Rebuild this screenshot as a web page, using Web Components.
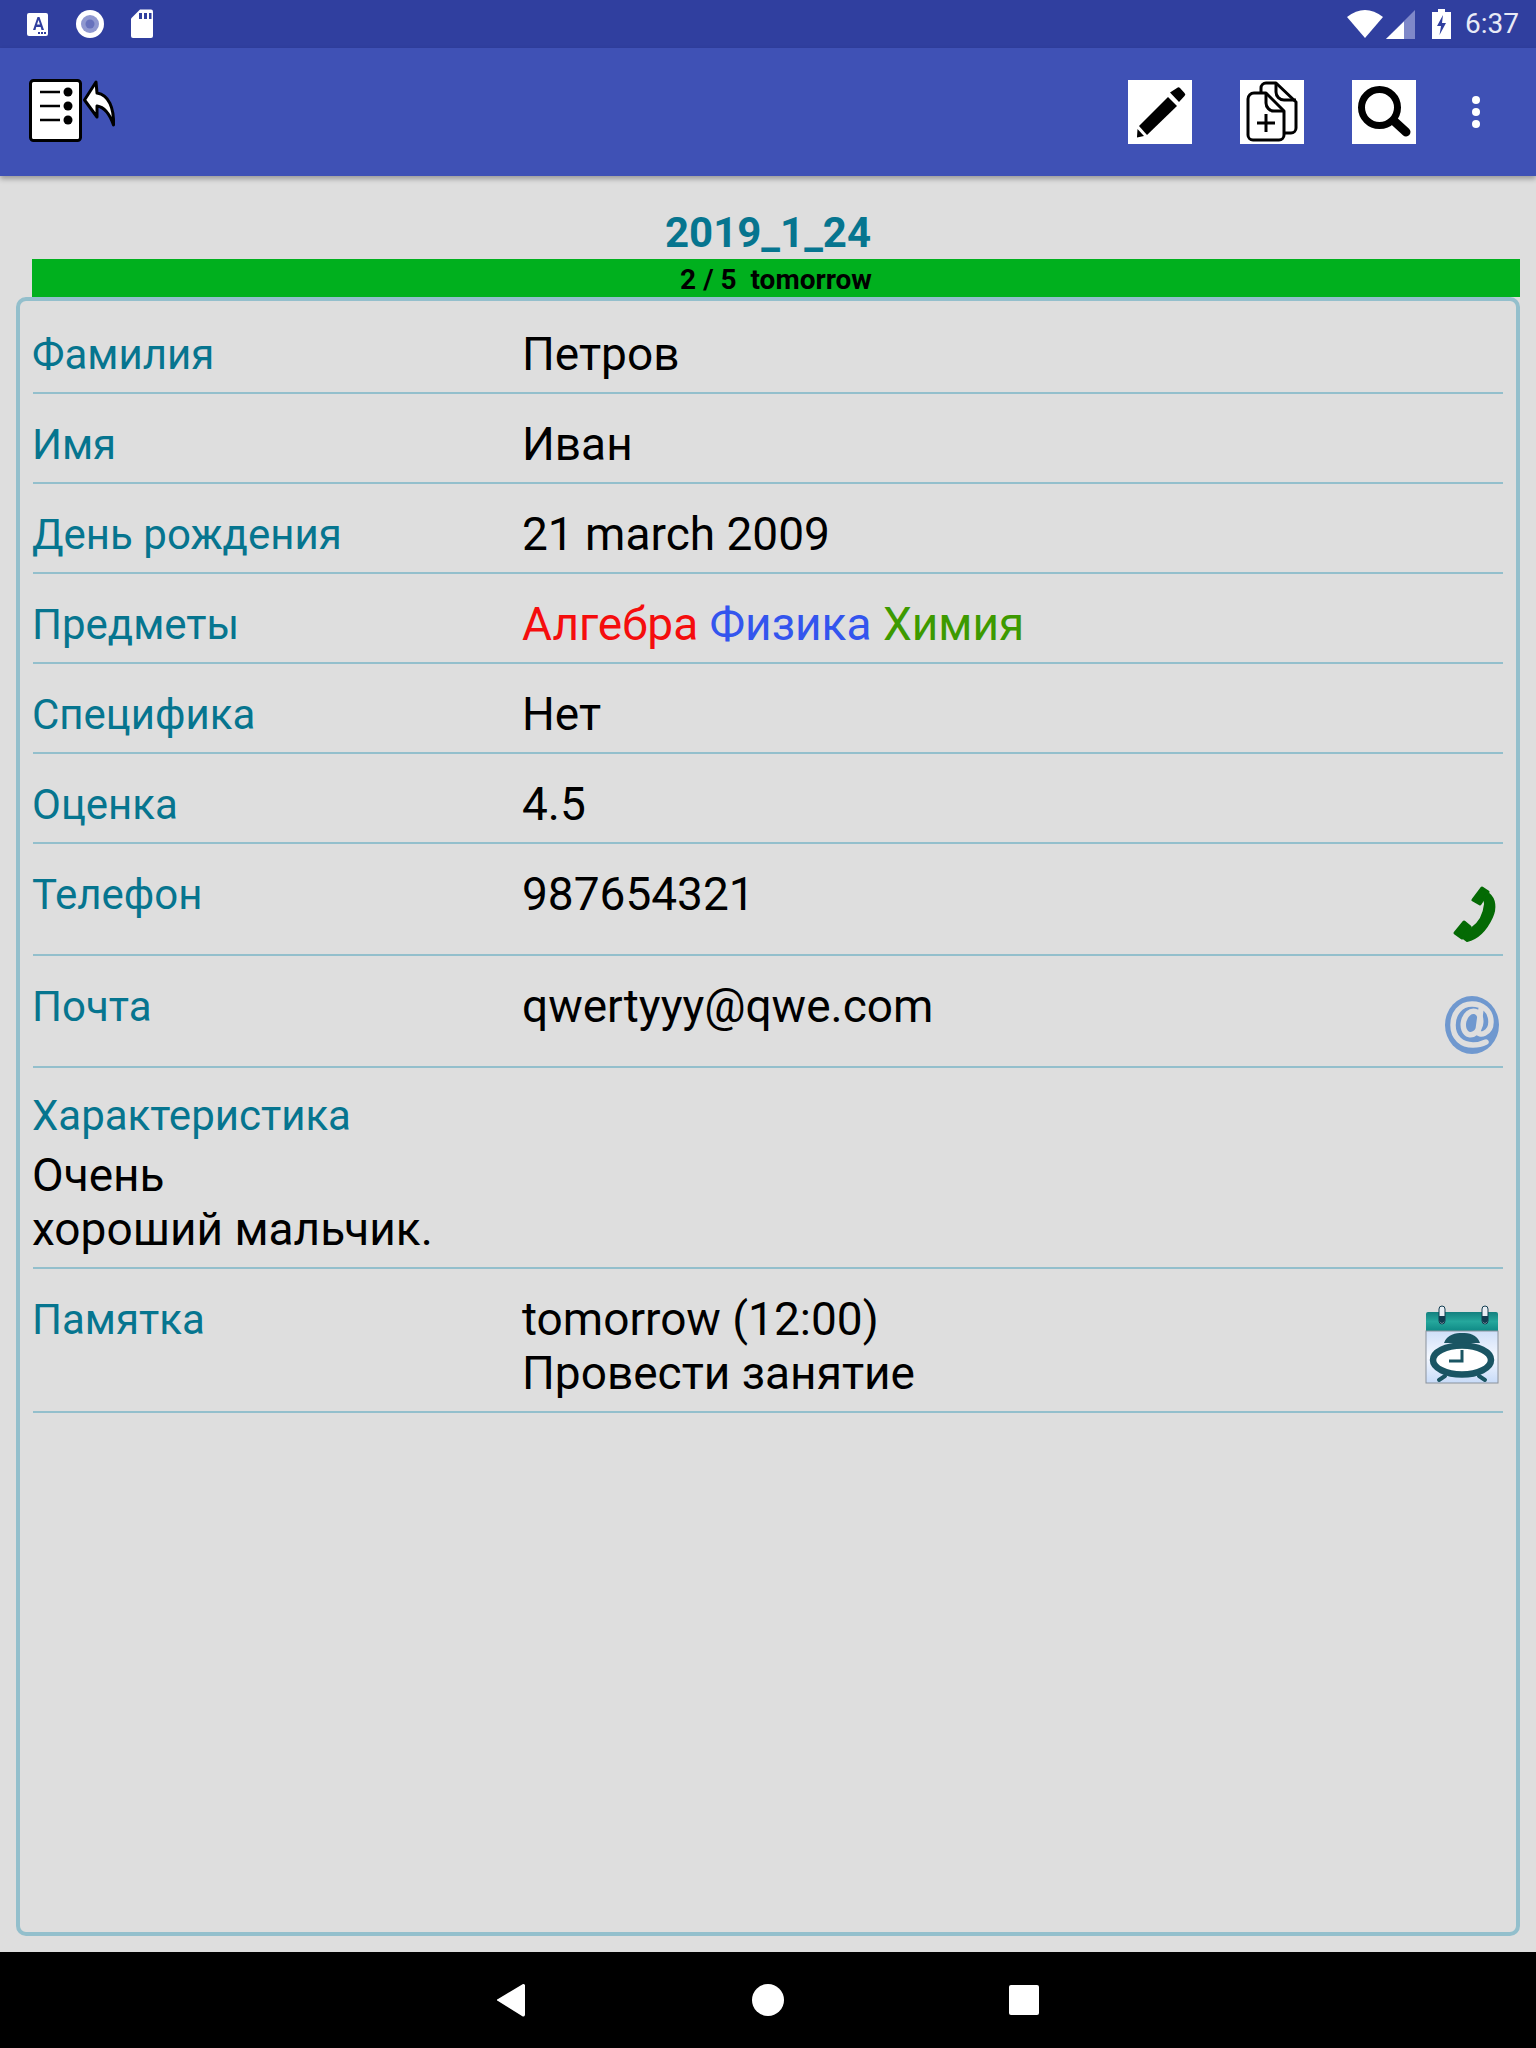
<!DOCTYPE html>
<html lang="ru">
<head>
<meta charset="utf-8">
<title>Student</title>
<style>
html, body { margin: 0; padding: 0; }
body { width: 1536px; height: 2048px; background: #dedede; font-family: Roboto, "Liberation Sans", sans-serif; }
#app { display: flex; flex-direction: column; height: 2048px; }
</style>
</head>
<body>
<div id="app">
  <status-bar></status-bar>
  <app-bar></app-bar>
  <lesson-header title="2019_1_24" note="2 / 5&nbsp; tomorrow"></lesson-header>
  <info-panel>
    <info-row label="Фамилия" style="--top:26px;--bottom:11px">Петров</info-row>
    <info-row label="Имя">Иван</info-row>
    <info-row label="День рождения">21 march 2009</info-row>
    <info-row label="Предметы"><span style="color:#f50d0d">Алгебра</span> <span style="color:#3355ee">Физика</span> <span style="color:#3d9a00">Химия</span></info-row>
    <info-row label="Специфика">Нет</info-row>
    <info-row label="Оценка">4.5</info-row>
    <info-row label="Телефон" style="--bottom:33px">987654321<row-icon slot="icon" kind="phone"></row-icon></info-row>
    <info-row label="Почта" style="--bottom:33px">qwertyyy@qwe.com<row-icon slot="icon" kind="at"></row-icon></info-row>
    <info-row label="Характеристика" stacked>Очень<br>хороший мальчик.</info-row>
    <info-row label="Памятка">tomorrow (12:00)<br>Провести занятие<row-icon slot="icon" kind="alarm"></row-icon></info-row>
  </info-panel>
  <nav-bar></nav-bar>
</div>

<script>
class StatusBar extends HTMLElement {
    constructor() {
        super();
        this.attachShadow({mode: 'open'}).innerHTML = `
        <style>
            :host { display: flex; align-items: center; height: 48px; background: #303f9f; color: #e8eaf6; flex: none; }
            svg { display: block; flex: none; }
            .left { display: flex; align-items: center; margin-left: 26px; }
            .right { display: flex; align-items: center; margin-left: auto; margin-right: 17px; }
            .time { font: 400 28px Roboto, sans-serif; margin-left: 14px; line-height: 48px; }
        </style>
        <div class="left">
            <svg width="24" height="26" viewBox="0 0 24 26"><rect x="1" y="2" width="21" height="23" rx="2" fill="#fff"/><path d="M7 19 L11.5 6 L13.500 6 L18 19 L15.500 19 L14.700 16 L10.200 16 L9.500 19Z M11 13.500 H14 L12.500 9Z" fill="#303f9f" fill-rule="evenodd"/><path d="M12 21h2v2h-2zM15 21h2v2h-2zM18 21h2v2h-2z" fill="#303f9f"/></svg>
            <svg style="margin-left:25px" width="30" height="30" viewBox="0 0 30 30"><circle cx="15" cy="15" r="14" fill="#fff"/><circle cx="15" cy="15" r="9" fill="#8f98d0"/><circle cx="15" cy="15" r="4.500" fill="#6772bd"/></svg>
            <svg style="margin-left:25px" width="24" height="30" viewBox="0 0 24 30"><path d="M10 0.500 H21 a2 2 0 0 1 2 2 V27 a2 2 0 0 1 -2 2 H3 a2 2 0 0 1 -2 -2 V9.500Z" fill="#fff"/><path d="M9 4h3v6h-3zM14 4h3v6h-3zM19 4h2.500v6h-2.500z" fill="#303f9f"/></svg>
        </div>
        <div class="right">
            <svg width="36" height="28" viewBox="0 0 36 28"><path d="M0 7 Q18 -7 36 7 L18 28Z" fill="#fff"/></svg>
            <svg style="margin-left:3px" width="29" height="29" viewBox="0 0 29 29"><path d="M29 0V29H0Z" fill="#7f88c9"/><path d="M18 11.500V29H0Z" fill="#fff"/></svg>
            <svg style="margin-left:17px" width="19" height="30" viewBox="0 0 19 30"><path d="M6 0h7v3h6v27H0V3h6Z" fill="#fff"/><path d="M11 6 L5 17 H9 L7.500 26 L14 14 H10Z" fill="#303f9f"/></svg>
            <span class="time">6:37</span>
        </div>`;
    }
}
customElements.define('status-bar', StatusBar);

class ActionButton extends HTMLElement {
    constructor() {
        super();
        this.attachShadow({mode: 'open'}).innerHTML = `
        <style>
            :host { display: block; width: 64px; height: 64px; background: #fff; flex: none; }
            svg { display: block; width: 64px; height: 64px; }
        </style>
        <svg viewBox="0 0 64 64">${actionIcons[this.getAttribute('kind')]}</svg>`;
    }
}

const actionIcons = {
    edit: `<path d="M42 12.500 L49 8 a2 2 0 0 1 3 0 L56.500 13 a2 2 0 0 1 0 3 L51 22Z" fill="#000"/>
        <path d="M11 46 L40 17 L49 26 L19 55Z" fill="#000"/>
        <path d="M9.500 49 L16 56 L9 57.500Z" fill="#000"/>`,
    copy: `<g fill="none" stroke="#000" stroke-width="3" stroke-linejoin="round">
        <path d="M21 14 V8 a5 5 0 0 1 5 -5 H36 L56 22 V48 a5 5 0 0 1 -5 5 H45"/>
        <path d="M36 3 V12 a8 8 0 0 0 8 8 H56"/>
        <path d="M14 13 H26 L44 31 V55 a5 5 0 0 1 -5 5 H13 a5 5 0 0 1 -5 -5 V19 a6 6 0 0 1 6 -6Z" fill="#fff"/>
        <path d="M26 13 V23 a8 8 0 0 0 8 8 H44"/>
        <path d="M26 34 V52 M17 43 H35"/></g>`,
    search: `<circle cx="27.500" cy="27.500" r="18" fill="none" stroke="#000" stroke-width="7"/>
        <path d="M42 41 L54 52" fill="none" stroke="#000" stroke-width="9" stroke-linecap="round"/>`
};

class AppBar extends HTMLElement {
    constructor() {
        super();
        this.attachShadow({mode: 'open'}).innerHTML = `
        <style>
            :host { display: flex; align-items: flex-start; height: 128px; background: #3f51b5; box-shadow: 0 3px 5px rgba(0,0,0,.3); flex: none; position: relative; }
            .home { display: block; margin: 30px 0 0 28px; }
            .actions { display: flex; gap: 48px; margin: 32px 0 0 auto; }
            .more { display: flex; flex-direction: column; gap: 4px; margin: 48px 56px 0 56px; }
            .more i { display: block; width: 8px; height: 8px; border-radius: 50%; background: #fff; }
        </style>
        <svg class="home" width="90" height="66" viewBox="0 0 90 66">
            <rect x="2.500" y="2.500" width="50" height="60" rx="3" fill="#fff" stroke="#000" stroke-width="3"/>
            <path d="M12 14 H32 M12 28 H32 M12 42 H32" stroke="#000" stroke-width="2.500"/>
            <circle cx="40" cy="14" r="4.500"/><circle cx="40" cy="28" r="4.500"/><circle cx="40" cy="42" r="4.500"/>
            <path d="M56.500 22 L68 4 L69 15 C81 17 86 30 85.500 47 C81 34 76 29 69 28 L69 39Z" fill="#fff" stroke="#000" stroke-width="3" stroke-linejoin="round"/>
        </svg>
        <div class="actions">
            <action-button kind="edit"></action-button>
            <action-button kind="copy"></action-button>
            <action-button kind="search"></action-button>
        </div>
        <div class="more"><i></i><i></i><i></i></div>`;
    }
}
customElements.define('action-button', ActionButton);
customElements.define('app-bar', AppBar);

class LessonHeader extends HTMLElement {
    constructor() {
        super();
        this.attachShadow({mode: 'open'}).innerHTML = `
        <style>
            :host { display: block; flex: none; padding: 31px 16px 0 32px; }
            .title { font: 700 42px/52px Roboto, sans-serif; color: #06758f; text-align: center; margin-right: 16px; height: 52px; }
            .bar { height: 38px; background: #00b01e; font: 700 28px/42px Roboto, sans-serif; color: #000; text-align: center; }
        </style>
        <div class="title"></div>
        <div class="bar"></div>`;
        this.shadowRoot.querySelector('.title').textContent = this.getAttribute('title');
        this.shadowRoot.querySelector('.bar').textContent = this.getAttribute('note');
    }
}
customElements.define('lesson-header', LessonHeader);

class InfoPanel extends HTMLElement {
    constructor() {
        super();
        this.attachShadow({mode: 'open'}).innerHTML = `
        <style>
            :host { display: block; flex: none; box-sizing: border-box; height: 1639px; margin: 0 16px; border: 4px solid #93bfcc; border-radius: 10px; padding: 0 13px; }
        </style>
        <slot></slot>`;
    }
}
customElements.define('info-panel', InfoPanel);

class InfoRow extends HTMLElement {
    constructor() {
        super();
        this.attachShadow({mode: 'open'}).innerHTML = `
        <style>
            :host { display: flex; flex-wrap: wrap; align-items: flex-start; position: relative; box-sizing: border-box; border-bottom: 2px solid #93bfcc; padding: var(--top, 23px) 0 var(--bottom, 11px) 0; font: 400 46px/54px Roboto, sans-serif; color: #000; }
            .label { width: 489px; flex: none; font-size: 42px; color: #06758f; transform: translate(-1px, 1px); }
            :host([stacked]) { padding-top: 26px; padding-bottom: 11px; }
            :host([stacked]) .label { width: 100%; line-height: 42px; margin-bottom: 12px; }
            :host([stacked]) .value { margin-left: -1px; }
            .value { flex: 1; }
            ::slotted([slot=icon]) { position: absolute; right: 0; }
        </style>
        <div class="label"></div>
        <div class="value"><slot></slot></div>
        <slot name="icon"></slot>`;
        this.shadowRoot.querySelector('.label').textContent = this.getAttribute('label');
    }
}
customElements.define('info-row', InfoRow);

const rowIcons = {
    phone: `<svg width="44" height="58" viewBox="0 0 44 58" style="margin-top:19px;margin-right:6px">
        <path d="M20 14 L29 2 L35 6 L27 18Z M2 47 L11 36 L17 41 L9 52Z" fill="#046a04" stroke="#046a04" stroke-width="3" stroke-linejoin="round"/>
        <path d="M31 10 L36 8 C42 13 43 22 39 31 C34 42 26 52 14 55 L10 52 L19 42 C26 37 31 28 32 18Z" fill="#046a04" stroke="#046a04" stroke-width="2" stroke-linejoin="round"/></svg>`,
    at: `<svg width="54" height="58" viewBox="0 0 54 58" style="margin-top:17px;margin-right:4px">
        <ellipse cx="27" cy="29" rx="27" ry="29" fill="#6f98cf"/>
        <g fill="none" stroke="#dedede" stroke-width="5.500">
        <ellipse cx="27" cy="27" rx="8.500" ry="12" transform="rotate(14 27 27)"/>
        <path d="M36 13 L33 35 C33 41 46 38 46 26 C46 14 37 8 27 8 C15 8 8 18 8 29 C8 42 17 49 28 49 C33 49 37 48 41 46" stroke-linecap="round"/></g></svg>`,
    alarm: `<svg width="74" height="80" viewBox="0 0 74 80" style="margin-top:13px;margin-right:4px">
        <defs>
            <linearGradient id="head" x1="0" y1="0" x2="0" y2="1"><stop offset="0" stop-color="#14807f"/><stop offset=".5" stop-color="#25a79c"/><stop offset="1" stop-color="#0f8a86"/></linearGradient>
            <linearGradient id="page" x1="0" y1="0" x2="0" y2="1"><stop offset="0" stop-color="#cfdff8"/><stop offset=".5" stop-color="#f4f8ff"/><stop offset="1" stop-color="#c8dbf8"/></linearGradient>
        </defs>
        <path d="M1 9 a2 2 0 0 1 2 -2 H71 a2 2 0 0 1 2 2 V26 H1Z" fill="url(#head)"/>
        <rect x="1" y="26" width="72" height="52" fill="url(#page)" stroke="#8a929c" stroke-width="1"/>
        <rect x="14" y="1" width="6" height="18" rx="3" fill="#e8eef4" stroke="#123c50" stroke-width="1"/>
        <rect x="57" y="1" width="6" height="18" rx="3" fill="#e8eef4" stroke="#123c50" stroke-width="1"/>
        <path d="M14 11 h6 v4 a3 3 0 0 1 -6 0Z M57 11 h6 v4 a3 3 0 0 1 -6 0Z" fill="#123c50"/>
        <path d="M19 38 C22 29 31 28 37 28 C44 28 52 29 55 38Z" fill="#1a5563"/>
        <ellipse cx="37" cy="55" rx="29" ry="14.500" fill="#fff" stroke="#1a5563" stroke-width="6.500"/>
        <path d="M37 45 V56 H24" fill="none" stroke="#1a5563" stroke-width="3"/>
        <path d="M14 75 L20 71 M60 75 L54 71" stroke="#1a5563" stroke-width="4" stroke-linecap="round"/></svg>`
};

class RowIcon extends HTMLElement {
    connectedCallback() {
        if (!this.shadowRoot) {
            this.attachShadow({mode: 'open'}).innerHTML = `<style>:host { display: block; } svg { display: block; }</style>${rowIcons[this.getAttribute('kind')]}`;
        }
    }
}
customElements.define('row-icon', RowIcon);

class NavBar extends HTMLElement {
    constructor() {
        super();
        this.attachShadow({mode: 'open'}).innerHTML = `
        <style>
            :host { display: flex; align-items: center; justify-content: center; gap: 225px; margin-top: auto; height: 96px; background: #000; flex: none; }
            svg { display: block; }
        </style>
        <svg width="30" height="34" viewBox="0 0 30 34"><path d="M26 1 a2 2 0 0 1 2 1 V32 a2 2 0 0 1 -3 1 L1 18 a1 1 0 0 1 0 -2Z" fill="#fff"/></svg>
        <svg width="32" height="32" viewBox="0 0 32 32"><circle cx="16" cy="16" r="16" fill="#fff"/></svg>
        <svg width="30" height="30" viewBox="0 0 30 30"><rect width="30" height="30" rx="2" fill="#fff"/></svg>`;
    }
}
customElements.define('nav-bar', NavBar);
</script>
</body>
</html>
